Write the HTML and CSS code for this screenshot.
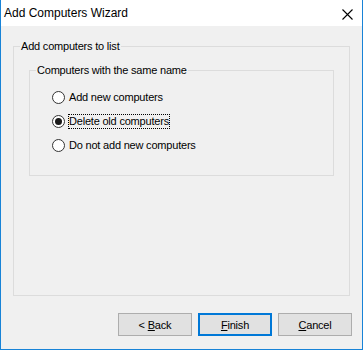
FILE: index.html
```html
<!DOCTYPE html>
<html lang="en">
<head>
    <meta charset="UTF-8">
    <title>Add Computers Wizard</title>
    <link rel="stylesheet" href="styles.css">
</head>
<body>
    <div class="window">
        <div class="titlebar">
            <span class="title">Add Computers Wizard</span>
            <svg class="close" width="11" height="11" viewBox="0 0 11 11">
                <path d="M0.5 0.5 L10.5 10.5 M10.5 0.5 L0.5 10.5" stroke="#000" stroke-width="1.1" fill="none"/>
            </svg>
        </div>
        <div class="content">
            <fieldset class="group outer">
                <legend>Add computers to list</legend>
                <div class="group-body">
                    <fieldset class="group inner">
                        <legend>Computers with the same name</legend>
                        <div class="options">
                            <label class="option">
                                <input type="radio" name="same" class="radio">
                                <span class="option-text">Add new computers</span>
                            </label>
                            <label class="option">
                                <input type="radio" name="same" class="radio" checked>
                                <span class="option-text focused">Delete old computers</span>
                            </label>
                            <label class="option">
                                <input type="radio" name="same" class="radio">
                                <span class="option-text">Do not add new computers</span>
                            </label>
                        </div>
                    </fieldset>
                </div>
            </fieldset>
            <div class="buttons">
                <button class="btn">&lt; <u>B</u>ack</button>
                <button class="btn default"><u>F</u>inish</button>
                <button class="btn"><u>C</u>ancel</button>
            </div>
        </div>
    </div>
</body>
</html>
```

FILE: styles.css
```css
body {
    margin: 0;
    font-family: 'Liberation Sans', Arial, sans-serif;
    color: #000;
}
.window {
    width: 363px;
    height: 350px;
    box-sizing: border-box;
    border: 1px solid #1883d7;
    border-top: none;
    display: flex;
    flex-direction: column;
    background: #f0f0f0;
}
.titlebar {
    height: 26px;
    flex: none;
    background: #fff;
    display: flex;
    align-items: center;
    justify-content: space-between;
    padding-left: 3px;
}
.title {
    font-size: 12px;
    line-height: 26px;
}
.close {
    margin: 2px 9px 0 0;
}
.content {
    flex: 1;
    display: flex;
    flex-direction: column;
    padding: 14px 10px 13px 10px;
}
.group {
    margin: 0;
    padding: 0;
    border: 1px solid #dcdcdc;
    min-width: 0;
}
.group legend {
    font-size: 11px;
    line-height: 13px;
    letter-spacing: -0.2px;
    padding: 0 1px;
    margin-left: 6px;
}
.outer {
    flex: 1;
    margin: 0 2px;
}
.group-body {
    padding: 11px 15px 0 15px;
}
.options {
    padding: 8px 0 18px 22px;
}
.option {
    height: 24px;
    display: flex;
    align-items: center;
    font-size: 11px;
    letter-spacing: -0.2px;
}
.radio {
    appearance: none;
    -webkit-appearance: none;
    margin: 0 4px 0 0;
    width: 13px;
    height: 13px;
    border: 1px solid #333;
    border-radius: 50%;
    background: #fff;
    position: relative;
    flex: none;
}
.radio:checked::after {
    content: "";
    position: absolute;
    left: 2px;
    top: 2px;
    width: 7px;
    height: 7px;
    border-radius: 50%;
    background: #1a1a1a;
}
.option-text {
    display: inline-block;
    line-height: 13px;
}
.option-text.focused {
    outline: 1px dotted #000;
}
.buttons {
    margin-top: 17px;
    display: flex;
    justify-content: flex-end;
    gap: 6px;
}
.btn {
    width: 74px;
    height: 23px;
    box-sizing: border-box;
    background: #e1e1e1;
    border: 1px solid #adadad;
    border-radius: 0;
    font-family: 'Liberation Sans', Arial, sans-serif;
    font-size: 11px;
    letter-spacing: -0.2px;
    color: #000;
    padding: 0;
}
.btn.default {
    border: 2px solid #0078d7;
}
```
